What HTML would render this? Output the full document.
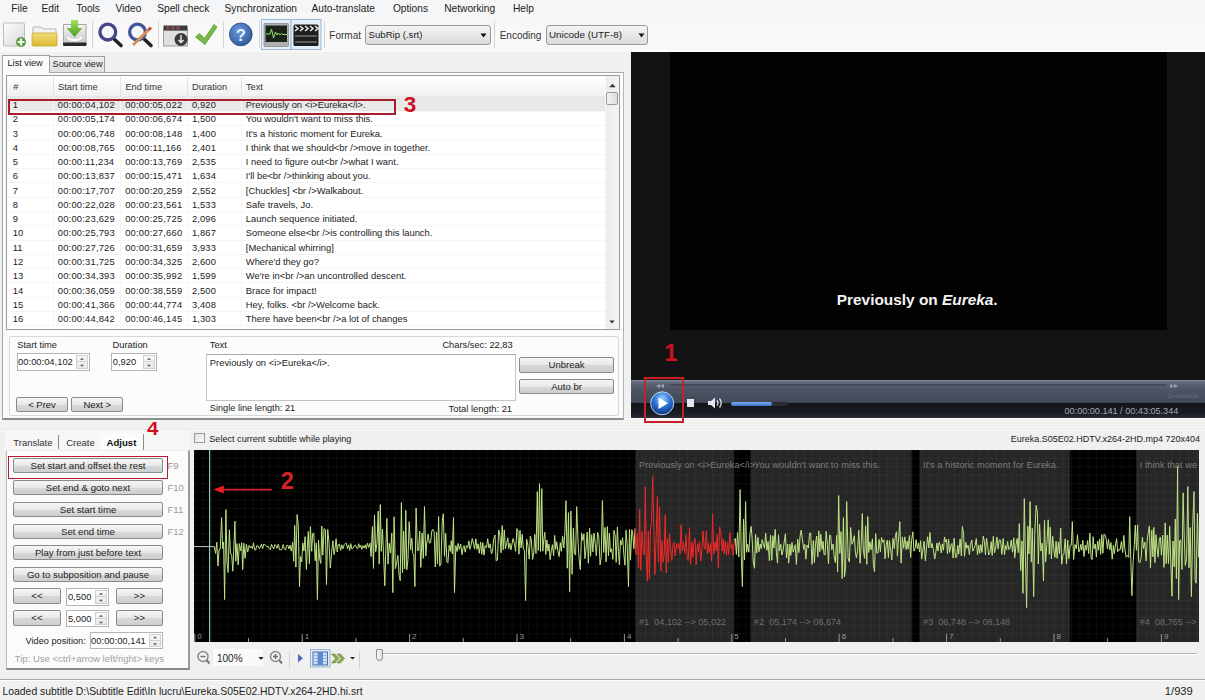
<!DOCTYPE html><html><head><meta charset="utf-8"><style>*{box-sizing:border-box;margin:0;padding:0}
html,body{width:1205px;height:700px;overflow:hidden;background:#f0f0f0;font-family:"Liberation Sans",sans-serif;color:#1e1e1e;position:relative}
.a{position:absolute}
.t{position:absolute;white-space:nowrap;line-height:1}
.btn{position:absolute;border:1px solid #8a8a8a;border-radius:2px;background:linear-gradient(#f6f6f6,#e8e8e8 50%,#d8d8d8 51%,#cfcfcf);text-align:center;font-size:9.5px;color:#222;white-space:nowrap}
.sep{position:absolute;width:1px;background:#c8c8c8;border-right:1px solid #fff}
</style></head><body>
<div class="a" style="left:0;top:0;width:1205px;height:18px;background:linear-gradient(#f4f5f6,#f7f7f8)"></div>
<div class="a" style="left:0;top:18px;width:1205px;height:34px;background:linear-gradient(#f6f6f6,#fafafa 60%,#f8f8f8)"></div>
<div class="a" style="left:631px;top:51px;width:574px;height:1px;background:#fff"></div>
<div class="t" style="left:11.20px;top:3.57px;font-size:10.2px;color:#222">File</div>
<div class="t" style="left:41.50px;top:3.57px;font-size:10.2px;color:#222">Edit</div>
<div class="t" style="left:76.20px;top:3.57px;font-size:10.2px;color:#222">Tools</div>
<div class="t" style="left:115.50px;top:3.57px;font-size:10.2px;color:#222">Video</div>
<div class="t" style="left:157.20px;top:3.57px;font-size:10.2px;color:#222">Spell check</div>
<div class="t" style="left:224.50px;top:3.57px;font-size:10.2px;color:#222">Synchronization</div>
<div class="t" style="left:311.50px;top:3.57px;font-size:10.2px;color:#222">Auto-translate</div>
<div class="t" style="left:392.90px;top:3.57px;font-size:10.2px;color:#222">Options</div>
<div class="t" style="left:444.20px;top:3.57px;font-size:10.2px;color:#222">Networking</div>
<div class="t" style="left:513.00px;top:3.57px;font-size:10.2px;color:#222">Help</div>
<div class="a" style="left:92.0px;top:21px;width:1px;height:27px;background:#d4d4d4"></div>
<div class="a" style="left:158.0px;top:21px;width:1px;height:27px;background:#d4d4d4"></div>
<div class="a" style="left:223.0px;top:21px;width:1px;height:27px;background:#d4d4d4"></div>
<div class="a" style="left:258.5px;top:21px;width:1px;height:27px;background:#d4d4d4"></div>
<div class="a" style="left:323.5px;top:21px;width:1px;height:27px;background:#d4d4d4"></div>
<div class="a" style="left:494.0px;top:21px;width:1px;height:27px;background:#d4d4d4"></div>
<svg class="a" style="left:0;top:16px" width="660" height="36" viewBox="0 16 660 36">
<defs>
<linearGradient id="gDoc" x1="0" y1="0" x2="1" y2="1"><stop offset="0" stop-color="#fdfdfd"/><stop offset="1" stop-color="#d8d8d8"/></linearGradient>
<linearGradient id="gFold" x1="0" y1="0" x2="0" y2="1"><stop offset="0" stop-color="#f4dc78"/><stop offset="1" stop-color="#dcb834"/></linearGradient>
<linearGradient id="gTray" x1="0" y1="0" x2="0" y2="1"><stop offset="0" stop-color="#f4f4f4"/><stop offset="1" stop-color="#c8c8c8"/></linearGradient>
<linearGradient id="gGreen" x1="0" y1="0" x2="0" y2="1"><stop offset="0" stop-color="#a8e060"/><stop offset="1" stop-color="#4a9a20"/></linearGradient>
<radialGradient id="gHelp" cx="0.4" cy="0.35" r="0.7"><stop offset="0" stop-color="#6a9ad8"/><stop offset="1" stop-color="#2a5a9a"/></radialGradient>
</defs>
<!-- new doc -->
<rect x="3.5" y="23" width="21" height="23" rx="1" fill="url(#gDoc)" stroke="#bdbdbd" stroke-width="1"/>
<circle cx="21" cy="42" r="5" fill="#5a9a4a"/>
<path d="M21 38.6v6.8M17.6 42h6.8" stroke="#e8f8d8" stroke-width="2.2"/>
<!-- folder -->
<path d="M33 27h8l2 2h13v5H33z" fill="#f2f2f2" stroke="#b8b8b8" stroke-width="1"/>
<rect x="32" y="33" width="25" height="13" rx="1" fill="url(#gFold)" stroke="#c8a830" stroke-width="0.8"/>
<!-- download tray -->
<rect x="63.5" y="24.5" width="22.5" height="20" fill="url(#gTray)" stroke="#a8a8a8" stroke-width="1"/>
<rect x="63" y="42.5" width="23.5" height="3.5" rx="1" fill="#2a2a2a"/>
<path d="M68 37c0 4 13 4 13 0" fill="none" stroke="#fff" stroke-width="2"/>
<path d="M71 20h7v8h4.5l-8 9-8-9H71z" fill="url(#gGreen)"/>
<!-- magnifier 1 -->
<line x1="113" y1="38" x2="121" y2="45.5" stroke="#222" stroke-width="3.6" stroke-linecap="round"/>
<circle cx="107.8" cy="32.1" r="7.9" fill="#f4f6fa" stroke="#45458a" stroke-width="3.3"/>
<!-- magnifier 2 + pencil -->
<line x1="143" y1="38" x2="151" y2="45.5" stroke="#222" stroke-width="3.6" stroke-linecap="round"/>
<circle cx="137.5" cy="32.1" r="7.9" fill="#f4f6fa" stroke="#45559a" stroke-width="3.3"/>
<line x1="133" y1="45" x2="150.5" y2="28" stroke="#d89050" stroke-width="3"/>
<line x1="148.5" y1="30" x2="151" y2="27.5" stroke="#c05040" stroke-width="3"/>
<!-- clapper -->
<rect x="163.5" y="30" width="24" height="16" fill="#e0e0e0" stroke="#9a9a9a" stroke-width="1"/>
<rect x="163.5" y="25.5" width="24" height="5" fill="#3a3a3a"/>
<path d="M166 26l3 2-3 2M171 26l3 2-3 2M176 26l3 2-3 2" fill="none" stroke="#9a5050" stroke-width="1.5"/>
<circle cx="181" cy="39.5" r="6.5" fill="#3a3a3a"/>
<path d="M181 35v7M178.5 40l2.5 2.5 2.5-2.5" fill="none" stroke="#eee" stroke-width="1.4"/>
<!-- check -->
<path d="M195.5 37l4-3.5 5 5 9.5-14 3 2.5-12 17.5z" fill="#78b848" stroke="#5a9a30" stroke-width="0.8"/>
<!-- help -->
<circle cx="240.8" cy="34.4" r="11.4" fill="url(#gHelp)" stroke="#2a4a7a" stroke-width="0.8"/>
<text x="240.8" y="41" text-anchor="middle" font-family="Liberation Sans" font-weight="bold" font-size="16" fill="#eef4ff">?</text>
<!-- waveform toggle -->
<rect x="261.5" y="19.5" width="29.5" height="30" fill="#e4eef8" stroke="#9ab8d8" stroke-width="1"/>
<rect x="264" y="23.5" width="24.5" height="23" rx="1" fill="#b0b0b0" stroke="#8a8a8a" stroke-width="0.8"/>
<rect x="265.5" y="25.5" width="21.5" height="16.5" fill="#1a2418"/>
<path d="M266 34h4l1.5-5 2 9 2-6 1.5 3 1.5-2 1.5 2 1.5-1.5 1.5 1h4" fill="none" stroke="#90e070" stroke-width="1"/>
<!-- video toggle -->
<rect x="291" y="19.5" width="30" height="30" fill="#e4eef8" stroke="#9ab8d8" stroke-width="1"/>
<rect x="293.5" y="24.5" width="25" height="21.5" rx="1.5" fill="#1e1e1e"/>
<path d="M295 26l3 2.5-3 2.5M300 26l3 2.5-3 2.5M305 26l3 2.5-3 2.5M310 26l3 2.5-3 2.5M315 26l3 2.5-3 2.5" fill="none" stroke="#e8e8e8" stroke-width="1.6"/>
<path d="M295 36h22M295 42h22" stroke="#9a9a9a" stroke-width="1"/>
</svg>
<div class="t" style="left:329.30px;top:30.93px;font-size:10px;color:#333">Format</div>
<div class="a" style="left:365px;top:25px;width:126px;height:20px;border:1px solid #9a9a9a;border-radius:3px;background:linear-gradient(#f4f4f4,#e8e8e8 50%,#dcdcdc)"></div>
<div class="t" style="left:368.60px;top:30.47px;font-size:9.6px;color:#222">SubRip (.srt)</div>
<svg class="a" style="left:480px;top:33px" width="7" height="5"><path d="M0.5 0.5h6l-3 4z" fill="#111"/></svg>
<div class="t" style="left:499.70px;top:30.93px;font-size:10px;color:#333">Encoding</div>
<div class="a" style="left:546px;top:25px;width:102px;height:20px;border:1px solid #9a9a9a;border-radius:3px;background:linear-gradient(#f4f4f4,#e8e8e8 50%,#dcdcdc)"></div>
<div class="t" style="left:549.00px;top:30.30px;font-size:9.8px;color:#222">Unicode (UTF-8)</div>
<svg class="a" style="left:637.5px;top:33px" width="7" height="5"><path d="M0.5 0.5h6l-3 4z" fill="#111"/></svg>
<div class="a" style="left:0;top:417.5px;width:1205px;height:11.5px;background:#f2f2f1;border-top:1px solid #fbfbfb"></div>
<div class="a" style="left:2px;top:71.5px;width:622px;height:348px;border:1px solid #a8a8a8;border-bottom:2px solid #8e8e8e;border-right:1px solid #b4b4b4;background:#fbfbfb"></div>
<div class="a" style="left:49px;top:56px;width:56px;height:16px;border:1px solid #a0a0a0;border-bottom:none;background:linear-gradient(#f0f0f0,#e0e0e0)"></div>
<div class="t" style="left:52.50px;top:60.21px;font-size:9.2px;color:#222">Source view</div>
<div class="a" style="left:2px;top:54.5px;width:48px;height:18px;border:1px solid #a0a0a0;border-bottom:none;background:#fbfbfb"></div>
<div class="t" style="left:7.50px;top:58.71px;font-size:9.2px;color:#222">List view</div>
<div class="a" style="left:6px;top:75px;width:614px;height:255px;border:1px solid #9a9a9a;background:#fff"></div>
<div class="a" style="left:7px;top:76px;width:598px;height:20.5px;background:linear-gradient(#ffffff,#f6f6f6 60%,#f0f0f2);border-bottom:1px solid #e6e6e6"></div>
<div class="a" style="left:53.0px;top:77px;width:1px;height:19px;background:#e2e2e2"></div>
<div class="a" style="left:120.2px;top:77px;width:1px;height:19px;background:#e2e2e2"></div>
<div class="a" style="left:186.9px;top:77px;width:1px;height:19px;background:#e2e2e2"></div>
<div class="a" style="left:241.1px;top:77px;width:1px;height:19px;background:#e2e2e2"></div>
<div class="t" style="left:13.30px;top:83.33px;font-size:9.3px;color:#333">#</div>
<div class="t" style="left:58.00px;top:83.33px;font-size:9.3px;color:#333">Start time</div>
<div class="t" style="left:125.40px;top:83.33px;font-size:9.3px;color:#333">End time</div>
<div class="t" style="left:192.00px;top:83.33px;font-size:9.3px;color:#333">Duration</div>
<div class="t" style="left:245.90px;top:83.33px;font-size:9.3px;color:#333">Text</div>
<div class="a" style="left:7px;top:96.5px;width:598px;height:15px;background:#e9e9ea"></div>
<div class="a" style="left:7px;top:111.1px;width:598px;height:1px;background:#f5f5f5"></div>
<div class="a" style="left:7px;top:125.3px;width:598px;height:1px;background:#f5f5f5"></div>
<div class="a" style="left:7px;top:139.6px;width:598px;height:1px;background:#f5f5f5"></div>
<div class="a" style="left:7px;top:153.9px;width:598px;height:1px;background:#f5f5f5"></div>
<div class="a" style="left:7px;top:168.2px;width:598px;height:1px;background:#f5f5f5"></div>
<div class="a" style="left:7px;top:182.4px;width:598px;height:1px;background:#f5f5f5"></div>
<div class="a" style="left:7px;top:196.7px;width:598px;height:1px;background:#f5f5f5"></div>
<div class="a" style="left:7px;top:211.0px;width:598px;height:1px;background:#f5f5f5"></div>
<div class="a" style="left:7px;top:225.2px;width:598px;height:1px;background:#f5f5f5"></div>
<div class="a" style="left:7px;top:239.5px;width:598px;height:1px;background:#f5f5f5"></div>
<div class="a" style="left:7px;top:253.8px;width:598px;height:1px;background:#f5f5f5"></div>
<div class="a" style="left:7px;top:268.0px;width:598px;height:1px;background:#f5f5f5"></div>
<div class="a" style="left:7px;top:282.3px;width:598px;height:1px;background:#f5f5f5"></div>
<div class="a" style="left:7px;top:296.6px;width:598px;height:1px;background:#f5f5f5"></div>
<div class="a" style="left:7px;top:310.8px;width:598px;height:1px;background:#f5f5f5"></div>
<div class="a" style="left:7px;top:325.1px;width:598px;height:1px;background:#f5f5f5"></div>
<div class="a" style="left:53.0px;top:97px;width:1px;height:232px;background:#f6f6f6"></div>
<div class="a" style="left:120.2px;top:97px;width:1px;height:232px;background:#f6f6f6"></div>
<div class="a" style="left:186.9px;top:97px;width:1px;height:232px;background:#f6f6f6"></div>
<div class="a" style="left:241.1px;top:97px;width:1px;height:232px;background:#f6f6f6"></div>
<div class="t" style="left:12.80px;top:100.04px;font-size:9.4px;color:#222">1</div>
<div class="t" style="left:57.80px;top:100.04px;font-size:9.4px;color:#222;letter-spacing:0.2px">00:00:04,102</div>
<div class="t" style="left:125.20px;top:100.04px;font-size:9.4px;color:#222;letter-spacing:0.2px">00:00:05,022</div>
<div class="t" style="left:191.90px;top:100.04px;font-size:9.4px;color:#222;letter-spacing:0.15px">0,920</div>
<div class="t" style="left:245.80px;top:100.04px;font-size:9.4px;color:#222">Previously on &lt;i&gt;Eureka&lt;/i&gt;.</div>
<div class="t" style="left:12.80px;top:114.31px;font-size:9.4px;color:#222">2</div>
<div class="t" style="left:57.80px;top:114.31px;font-size:9.4px;color:#222;letter-spacing:0.2px">00:00:05,174</div>
<div class="t" style="left:125.20px;top:114.31px;font-size:9.4px;color:#222;letter-spacing:0.2px">00:00:06,674</div>
<div class="t" style="left:191.90px;top:114.31px;font-size:9.4px;color:#222;letter-spacing:0.15px">1,500</div>
<div class="t" style="left:245.80px;top:114.31px;font-size:9.4px;color:#222">You wouldn't want to miss this.</div>
<div class="t" style="left:12.80px;top:128.58px;font-size:9.4px;color:#222">3</div>
<div class="t" style="left:57.80px;top:128.58px;font-size:9.4px;color:#222;letter-spacing:0.2px">00:00:06,748</div>
<div class="t" style="left:125.20px;top:128.58px;font-size:9.4px;color:#222;letter-spacing:0.2px">00:00:08,148</div>
<div class="t" style="left:191.90px;top:128.58px;font-size:9.4px;color:#222;letter-spacing:0.15px">1,400</div>
<div class="t" style="left:245.80px;top:128.58px;font-size:9.4px;color:#222">It's a historic moment for Eureka.</div>
<div class="t" style="left:12.80px;top:142.85px;font-size:9.4px;color:#222">4</div>
<div class="t" style="left:57.80px;top:142.85px;font-size:9.4px;color:#222;letter-spacing:0.2px">00:00:08,765</div>
<div class="t" style="left:125.20px;top:142.85px;font-size:9.4px;color:#222;letter-spacing:0.2px">00:00:11,166</div>
<div class="t" style="left:191.90px;top:142.85px;font-size:9.4px;color:#222;letter-spacing:0.15px">2,401</div>
<div class="t" style="left:245.80px;top:142.85px;font-size:9.4px;color:#222">I think that we should&lt;br /&gt;move in together.</div>
<div class="t" style="left:12.80px;top:157.12px;font-size:9.4px;color:#222">5</div>
<div class="t" style="left:57.80px;top:157.12px;font-size:9.4px;color:#222;letter-spacing:0.2px">00:00:11,234</div>
<div class="t" style="left:125.20px;top:157.12px;font-size:9.4px;color:#222;letter-spacing:0.2px">00:00:13,769</div>
<div class="t" style="left:191.90px;top:157.12px;font-size:9.4px;color:#222;letter-spacing:0.15px">2,535</div>
<div class="t" style="left:245.80px;top:157.12px;font-size:9.4px;color:#222">I need to figure out&lt;br /&gt;what I want.</div>
<div class="t" style="left:12.80px;top:171.39px;font-size:9.4px;color:#222">6</div>
<div class="t" style="left:57.80px;top:171.39px;font-size:9.4px;color:#222;letter-spacing:0.2px">00:00:13,837</div>
<div class="t" style="left:125.20px;top:171.39px;font-size:9.4px;color:#222;letter-spacing:0.2px">00:00:15,471</div>
<div class="t" style="left:191.90px;top:171.39px;font-size:9.4px;color:#222;letter-spacing:0.15px">1,634</div>
<div class="t" style="left:245.80px;top:171.39px;font-size:9.4px;color:#222">I'll be&lt;br /&gt;thinking about you.</div>
<div class="t" style="left:12.80px;top:185.66px;font-size:9.4px;color:#222">7</div>
<div class="t" style="left:57.80px;top:185.66px;font-size:9.4px;color:#222;letter-spacing:0.2px">00:00:17,707</div>
<div class="t" style="left:125.20px;top:185.66px;font-size:9.4px;color:#222;letter-spacing:0.2px">00:00:20,259</div>
<div class="t" style="left:191.90px;top:185.66px;font-size:9.4px;color:#222;letter-spacing:0.15px">2,552</div>
<div class="t" style="left:245.80px;top:185.66px;font-size:9.4px;color:#222">[Chuckles] &lt;br /&gt;Walkabout.</div>
<div class="t" style="left:12.80px;top:199.93px;font-size:9.4px;color:#222">8</div>
<div class="t" style="left:57.80px;top:199.93px;font-size:9.4px;color:#222;letter-spacing:0.2px">00:00:22,028</div>
<div class="t" style="left:125.20px;top:199.93px;font-size:9.4px;color:#222;letter-spacing:0.2px">00:00:23,561</div>
<div class="t" style="left:191.90px;top:199.93px;font-size:9.4px;color:#222;letter-spacing:0.15px">1,533</div>
<div class="t" style="left:245.80px;top:199.93px;font-size:9.4px;color:#222">Safe travels, Jo.</div>
<div class="t" style="left:12.80px;top:214.20px;font-size:9.4px;color:#222">9</div>
<div class="t" style="left:57.80px;top:214.20px;font-size:9.4px;color:#222;letter-spacing:0.2px">00:00:23,629</div>
<div class="t" style="left:125.20px;top:214.20px;font-size:9.4px;color:#222;letter-spacing:0.2px">00:00:25,725</div>
<div class="t" style="left:191.90px;top:214.20px;font-size:9.4px;color:#222;letter-spacing:0.15px">2,096</div>
<div class="t" style="left:245.80px;top:214.20px;font-size:9.4px;color:#222">Launch sequence initiated.</div>
<div class="t" style="left:12.80px;top:228.47px;font-size:9.4px;color:#222">10</div>
<div class="t" style="left:57.80px;top:228.47px;font-size:9.4px;color:#222;letter-spacing:0.2px">00:00:25,793</div>
<div class="t" style="left:125.20px;top:228.47px;font-size:9.4px;color:#222;letter-spacing:0.2px">00:00:27,660</div>
<div class="t" style="left:191.90px;top:228.47px;font-size:9.4px;color:#222;letter-spacing:0.15px">1,867</div>
<div class="t" style="left:245.80px;top:228.47px;font-size:9.4px;color:#222">Someone else&lt;br /&gt;is controlling this launch.</div>
<div class="t" style="left:12.80px;top:242.74px;font-size:9.4px;color:#222">11</div>
<div class="t" style="left:57.80px;top:242.74px;font-size:9.4px;color:#222;letter-spacing:0.2px">00:00:27,726</div>
<div class="t" style="left:125.20px;top:242.74px;font-size:9.4px;color:#222;letter-spacing:0.2px">00:00:31,659</div>
<div class="t" style="left:191.90px;top:242.74px;font-size:9.4px;color:#222;letter-spacing:0.15px">3,933</div>
<div class="t" style="left:245.80px;top:242.74px;font-size:9.4px;color:#222">[Mechanical whirring]</div>
<div class="t" style="left:12.80px;top:257.01px;font-size:9.4px;color:#222">12</div>
<div class="t" style="left:57.80px;top:257.01px;font-size:9.4px;color:#222;letter-spacing:0.2px">00:00:31,725</div>
<div class="t" style="left:125.20px;top:257.01px;font-size:9.4px;color:#222;letter-spacing:0.2px">00:00:34,325</div>
<div class="t" style="left:191.90px;top:257.01px;font-size:9.4px;color:#222;letter-spacing:0.15px">2,600</div>
<div class="t" style="left:245.80px;top:257.01px;font-size:9.4px;color:#222">Where'd they go?</div>
<div class="t" style="left:12.80px;top:271.28px;font-size:9.4px;color:#222">13</div>
<div class="t" style="left:57.80px;top:271.28px;font-size:9.4px;color:#222;letter-spacing:0.2px">00:00:34,393</div>
<div class="t" style="left:125.20px;top:271.28px;font-size:9.4px;color:#222;letter-spacing:0.2px">00:00:35,992</div>
<div class="t" style="left:191.90px;top:271.28px;font-size:9.4px;color:#222;letter-spacing:0.15px">1,599</div>
<div class="t" style="left:245.80px;top:271.28px;font-size:9.4px;color:#222">We're in&lt;br /&gt;an uncontrolled descent.</div>
<div class="t" style="left:12.80px;top:285.55px;font-size:9.4px;color:#222">14</div>
<div class="t" style="left:57.80px;top:285.55px;font-size:9.4px;color:#222;letter-spacing:0.2px">00:00:36,059</div>
<div class="t" style="left:125.20px;top:285.55px;font-size:9.4px;color:#222;letter-spacing:0.2px">00:00:38,559</div>
<div class="t" style="left:191.90px;top:285.55px;font-size:9.4px;color:#222;letter-spacing:0.15px">2,500</div>
<div class="t" style="left:245.80px;top:285.55px;font-size:9.4px;color:#222">Brace for impact!</div>
<div class="t" style="left:12.80px;top:299.82px;font-size:9.4px;color:#222">15</div>
<div class="t" style="left:57.80px;top:299.82px;font-size:9.4px;color:#222;letter-spacing:0.2px">00:00:41,366</div>
<div class="t" style="left:125.20px;top:299.82px;font-size:9.4px;color:#222;letter-spacing:0.2px">00:00:44,774</div>
<div class="t" style="left:191.90px;top:299.82px;font-size:9.4px;color:#222;letter-spacing:0.15px">3,408</div>
<div class="t" style="left:245.80px;top:299.82px;font-size:9.4px;color:#222">Hey, folks. &lt;br /&gt;Welcome back.</div>
<div class="t" style="left:12.80px;top:314.09px;font-size:9.4px;color:#222">16</div>
<div class="t" style="left:57.80px;top:314.09px;font-size:9.4px;color:#222;letter-spacing:0.2px">00:00:44,842</div>
<div class="t" style="left:125.20px;top:314.09px;font-size:9.4px;color:#222;letter-spacing:0.2px">00:00:46,145</div>
<div class="t" style="left:191.90px;top:314.09px;font-size:9.4px;color:#222;letter-spacing:0.15px">1,303</div>
<div class="t" style="left:245.80px;top:314.09px;font-size:9.4px;color:#222">There have been&lt;br /&gt;a lot of changes</div>
<div class="a" style="left:605px;top:76px;width:14px;height:253px;background:linear-gradient(90deg,#ececec,#f4f4f4);border-left:1px solid #f8f8f8"></div>
<svg class="a" style="left:608.5px;top:83px" width="7" height="5"><path d="M0.8 4L3.5 1 6.2 4z" fill="#3a3a3a" stroke="#3a3a3a" stroke-width="0.6"/></svg>
<svg class="a" style="left:608.8px;top:319.5px" width="6" height="4"><path d="M0.8 0.8L3 3.2 5.2 0.8z" fill="#3a3a3a" stroke="#3a3a3a" stroke-width="0.5"/></svg>
<div class="a" style="left:605.5px;top:92px;width:12.5px;height:12.5px;border:1px solid #9a9a9a;border-radius:2px;background:linear-gradient(90deg,#f4f4f4,#dcdcdc)"></div>
<div class="a" style="left:8px;top:99px;width:388px;height:15.5px;border:2px solid #a81c2c"></div>
<div class="t" style="left:403.80px;top:93.75px;font-size:22.5px;color:#cc1122;font-weight:bold">3</div>
<div class="a" style="left:8.5px;top:336px;width:610.5px;height:80px;border:1px solid #d8d8d8;border-radius:2px;background:#fcfcfc"></div>
<div class="t" style="left:17.20px;top:341.33px;font-size:9.3px;color:#222">Start time</div>
<div class="t" style="left:112.60px;top:341.33px;font-size:9.3px;color:#222">Duration</div>
<div class="t" style="left:209.80px;top:341.33px;font-size:9.3px;color:#222">Text</div>
<div class="t" style="left:442.40px;top:341.33px;font-size:9.3px;color:#222">Chars/sec: 22,83</div>
<div class="a" style="left:16.6px;top:353.2px;width:73px;height:17.5px;border:1px solid #b4b4b4;background:#fff"></div><div class="a" style="left:75.6px;top:355.2px;width:12px;height:13.5px;border:1px solid #d0d0d0;background:linear-gradient(#f8f8f8,#e8e8e8)"></div><div class="a" style="left:76.6px;top:361.45px;width:10px;height:1px;background:#d0d0d0"></div><svg class="a" style="left:78.6px;top:356.2px" width="6" height="11.5"><path d="M1 3.75l2-2 2 2z M1 8.75l2 2 2-2z" fill="#5a5a5a"/></svg><div class="t" style="left:18.10px;top:357.39px;font-size:9.4px;color:#222">00:00:04,102</div>
<div class="a" style="left:111.2px;top:353.2px;width:46px;height:17.5px;border:1px solid #b4b4b4;background:#fff"></div><div class="a" style="left:143.2px;top:355.2px;width:12px;height:13.5px;border:1px solid #d0d0d0;background:linear-gradient(#f8f8f8,#e8e8e8)"></div><div class="a" style="left:144.2px;top:361.45px;width:10px;height:1px;background:#d0d0d0"></div><svg class="a" style="left:146.2px;top:356.2px" width="6" height="11.5"><path d="M1 3.75l2-2 2 2z M1 8.75l2 2 2-2z" fill="#5a5a5a"/></svg><div class="t" style="left:112.70px;top:357.39px;font-size:9.4px;color:#222">0,920</div>
<div class="btn" style="left:16.3px;top:397.2px;width:51.4px;height:15px;line-height:13px">&lt; Prev</div>
<div class="btn" style="left:71.4px;top:397.2px;width:51.8px;height:15px;line-height:13px">Next &gt;</div>
<div class="a" style="left:205.5px;top:353.5px;width:310px;height:47px;border:1px solid #c4c4c4;border-top-color:#a8a8a8;background:#fff"></div>
<div class="t" style="left:209.80px;top:358.34px;font-size:9.4px;color:#222">Previously on &lt;i&gt;Eureka&lt;/i&gt;.</div>
<div class="t" style="left:209.80px;top:404.01px;font-size:9.2px;color:#222">Single line length: 21</div>
<div class="t" style="left:448.50px;top:403.84px;font-size:9.4px;color:#222">Total length: 21</div>
<div class="btn" style="left:519.3px;top:357px;width:94.5px;height:15.5px;line-height:13.5px">Unbreak</div>
<div class="btn" style="left:519.3px;top:378.8px;width:94.5px;height:15.7px;line-height:13.7px">Auto br</div>
<div class="a" style="left:631px;top:52px;width:574px;height:328px;background:#131313"></div>
<div class="a" style="left:669.5px;top:52px;width:497px;height:277.5px;background:#020203"></div>
<div class="t" style="left:836.8px;top:292.4px;font-size:15.4px;font-weight:bold;color:#f4f4f4">Previously on <i>Eureka</i>.</div>
<div class="a" style="left:631px;top:379.5px;width:574px;height:24px;background:linear-gradient(#8a90a0 0,#6a7282 1.5px,#5a6272 4px,#4e5666 40%,#3e4656 100%)"></div>
<div class="a" style="left:631px;top:403px;width:574px;height:14.5px;background:linear-gradient(#121418,#1a1c24 70%,#2a2c36)"></div>
<div class="a" style="left:670px;top:383.5px;width:496px;height:3px;background:linear-gradient(#3a4050,#5a6070);border-radius:1px"></div>
<svg class="a" style="left:656px;top:384px" width="9" height="5"><path d="M4 0v4L0 2zM8 0v4L4 2z" fill="#9aa0b0"/></svg>
<svg class="a" style="left:1169px;top:384px" width="9" height="5"><path d="M1 0v4l4-2zM5 0v4l4-2z" fill="#9aa0b0"/></svg>
<div class="t" style="left:1168px;top:393px;font-size:6px;color:#6a7080">DirectShow</div>
<svg class="a" style="left:649px;top:390px" width="27" height="27">
<defs><radialGradient id="gPlay" cx="0.5" cy="0.3" r="0.75"><stop offset="0" stop-color="#9ad0ff"/><stop offset="0.5" stop-color="#2a70d0"/><stop offset="1" stop-color="#0a2a70"/></radialGradient></defs>
<circle cx="13.2" cy="13.3" r="11.5" fill="url(#gPlay)" stroke="#c0d8f0" stroke-width="1"/>
<path d="M9.5 7.5v11.6l9.5-5.8z" fill="#fff"/>
</svg>
<div class="a" style="left:686.5px;top:399.3px;width:7.5px;height:7.5px;background:#e8e8ec"></div>
<svg class="a" style="left:707px;top:397px" width="16" height="12"><path d="M1 4h3l4-3.5v11L4 8H1z" fill="#e8e8ec"/><path d="M10 3.5q2 2.5 0 5M12.5 1.5q3.5 4.5 0 9" fill="none" stroke="#e0e0e6" stroke-width="1.3"/></svg>
<div class="a" style="left:730.5px;top:402px;width:57px;height:3.5px;background:#2a2c34;border-radius:2px"></div>
<div class="a" style="left:730.5px;top:402px;width:41.5px;height:3.5px;background:linear-gradient(#7ab0f0,#3a70c8);border-radius:2px"></div>
<div class="t" style="left:1064.5px;top:406.5px;font-size:9.1px;color:#a4a8b2">00:00:00.141 / 00:43:05.344</div>
<div class="a" style="left:643.5px;top:376.8px;width:40px;height:46.6px;border:2px solid #c82028"></div>
<div class="t" style="left:664.50px;top:342.13px;font-size:23px;color:#d01020;font-weight:bold">1</div>
<div class="a" style="left:0;top:429px;width:1205px;height:1px;background:#e9e9e9"></div>
<div class="a" style="left:0;top:430px;width:1205px;height:1px;background:#fafafa"></div>
<div class="a" style="left:5px;top:431px;width:185px;height:19px;background:#f6f6f6"></div>
<div class="a" style="left:5.5px;top:449.5px;width:184.5px;height:220.5px;border:1px solid #b8b8b8;border-top-color:#ececec;border-bottom:2px solid #8a8a8a;border-right:2px solid #9a9a9a;background:#fbfbfb"></div>
<div class="a" style="left:100px;top:433px;width:43px;height:17px;background:#fcfcfc"></div>
<div class="a" style="left:57.6px;top:435px;width:1.3px;height:14px;background:#8a8a8a"></div>
<div class="a" style="left:143px;top:434px;width:1.3px;height:16px;background:#8a8a8a"></div>
<div class="t" style="left:13.30px;top:437.76px;font-size:9.5px;color:#333">Translate</div>
<div class="t" style="left:66.20px;top:437.76px;font-size:9.5px;color:#333">Create</div>
<div class="t" style="left:106.50px;top:437.67px;font-size:9.6px;color:#111;font-weight:bold">Adjust</div>
<div class="t" style="left:147.20px;top:420.99px;font-size:17.5px;color:#d01020;font-weight:bold;transform:scaleX(1.18);transform-origin:0 0">4</div>
<div class="btn" style="left:13.3px;top:458.2px;width:149.4px;height:15.2px;line-height:13.2px;font-size:9.6px">Set start and offset the rest</div>
<div class="t" style="left:167.50px;top:461.46px;font-size:9.5px;color:#9a9a9a">F9</div>
<div class="btn" style="left:13.3px;top:479.8px;width:149.4px;height:15.2px;line-height:13.2px;font-size:9.6px">Set end &amp; goto next</div>
<div class="t" style="left:167.50px;top:483.06px;font-size:9.5px;color:#9a9a9a">F10</div>
<div class="btn" style="left:13.3px;top:501.6px;width:149.4px;height:15.2px;line-height:13.2px;font-size:9.6px">Set start time</div>
<div class="t" style="left:167.50px;top:504.86px;font-size:9.5px;color:#9a9a9a">F11</div>
<div class="btn" style="left:13.3px;top:523.5px;width:149.4px;height:15.2px;line-height:13.2px;font-size:9.6px">Set end time</div>
<div class="t" style="left:167.50px;top:526.76px;font-size:9.5px;color:#9a9a9a">F12</div>
<div class="btn" style="left:13.3px;top:545.3px;width:149.4px;height:15.2px;line-height:13.2px;font-size:9.6px">Play from just before text</div>
<div class="btn" style="left:13.3px;top:566.8px;width:149.4px;height:15.2px;line-height:13.2px;font-size:9.6px">Go to subposition and pause</div>
<div class="a" style="left:8.3px;top:455.7px;width:159.5px;height:23.5px;border:1.8px solid #b81c2c"></div>
<div class="btn" style="left:13.3px;top:588.3px;width:47.3px;height:15.4px;line-height:13.4px;font-size:9.6px">&lt;&lt;</div>
<div class="btn" style="left:116.2px;top:588.3px;width:46.5px;height:15.4px;line-height:13.4px;font-size:9.6px">&gt;&gt;</div>
<div class="a" style="left:66.4px;top:588.3px;width:42.3px;height:17.3px;border:1px solid #b4b4b4;background:#fff"></div><div class="a" style="left:94.7px;top:590.3px;width:12px;height:13.3px;border:1px solid #d0d0d0;background:linear-gradient(#f8f8f8,#e8e8e8)"></div><div class="a" style="left:95.7px;top:596.4499999999999px;width:10px;height:1px;background:#d0d0d0"></div><svg class="a" style="left:97.7px;top:591.3px" width="6" height="11.3"><path d="M1 3.6500000000000004l2-2 2 2z M1 8.65l2 2 2-2z" fill="#5a5a5a"/></svg><div class="t" style="left:67.90px;top:592.39px;font-size:9.4px;color:#222">0,500</div>
<div class="btn" style="left:13.3px;top:610.2px;width:47.3px;height:15.4px;line-height:13.4px;font-size:9.6px">&lt;&lt;</div>
<div class="btn" style="left:116.2px;top:610.2px;width:46.5px;height:15.4px;line-height:13.4px;font-size:9.6px">&gt;&gt;</div>
<div class="a" style="left:66.4px;top:610.2px;width:42.3px;height:17.3px;border:1px solid #b4b4b4;background:#fff"></div><div class="a" style="left:94.7px;top:612.2px;width:12px;height:13.3px;border:1px solid #d0d0d0;background:linear-gradient(#f8f8f8,#e8e8e8)"></div><div class="a" style="left:95.7px;top:618.35px;width:10px;height:1px;background:#d0d0d0"></div><svg class="a" style="left:97.7px;top:613.2px" width="6" height="11.3"><path d="M1 3.6500000000000004l2-2 2 2z M1 8.65l2 2 2-2z" fill="#5a5a5a"/></svg><div class="t" style="left:67.90px;top:614.29px;font-size:9.4px;color:#222">5,000</div>
<div class="t" style="left:25.60px;top:636.81px;font-size:9.2px;color:#222">Video position:</div>
<div class="a" style="left:89.6px;top:632.3px;width:73px;height:16.6px;border:1px solid #b4b4b4;background:#fff"></div><div class="a" style="left:148.6px;top:634.3px;width:12px;height:12.600000000000001px;border:1px solid #d0d0d0;background:linear-gradient(#f8f8f8,#e8e8e8)"></div><div class="a" style="left:149.6px;top:640.0999999999999px;width:10px;height:1px;background:#d0d0d0"></div><svg class="a" style="left:151.6px;top:635.3px" width="6" height="10.600000000000001"><path d="M1 3.3000000000000007l2-2 2 2z M1 8.3l2 2 2-2z" fill="#5a5a5a"/></svg><div class="t" style="left:91.10px;top:636.04px;font-size:9.4px;color:#222">00:00:00,141</div>
<div class="t" style="left:14.80px;top:653.96px;font-size:9.5px;color:#a0a0a0">Tip: Use &lt;ctrl+arrow left/right&gt; keys</div>
<div class="a" style="left:194.2px;top:433.2px;width:10.5px;height:10.2px;border:1px solid #9a9a9a;background:linear-gradient(135deg,#e0e0e0,#fafafa)"></div>
<div class="t" style="left:209.30px;top:435.30px;font-size:9.1px;color:#222">Select current subtitle while playing</div>
<div class="t" style="left:1010.80px;top:434.98px;font-size:9.0px;color:#222">Eureka.S05E02.HDTV.x264-2HD.mp4 720x404</div>
<div class="a" style="left:213px;top:649px;width:50px;height:17px;background:#fafafa"></div>
<svg class="a" style="left:194px;top:646px" width="180" height="24">
<circle cx="9" cy="10.5" r="5" fill="#f0f0f0" stroke="#8a8a90" stroke-width="1.5"/>
<path d="M6.5 10.5h5" stroke="#6a6a70" stroke-width="1.4"/>
<path d="M12.5 14l3 3.5" stroke="#7a7a80" stroke-width="2"/>
<circle cx="81.5" cy="10.5" r="5" fill="#f0f0f0" stroke="#8a8a90" stroke-width="1.5"/>
<path d="M79 10.5h5M81.5 8v5" stroke="#6a6a70" stroke-width="1.4"/>
<path d="M85 14l3 3.5" stroke="#7a7a80" stroke-width="2"/>
<path d="M64.5 11h5l-2.5 3z" fill="#222"/>
<path d="M104 8v8.6l5-4.3z" fill="#4a6ac0"/>
<path d="M137.5 8l4 4.5-4 4.5h3.5l4-4.5-4-4.5zM143 8l4 4.5-4 4.5h3.5l4-4.5-4-4.5z" fill="#8aaa50" stroke="#5a7a30" stroke-width="0.5"/>
<path d="M156 11h5l-2.5 2.5z" fill="#222"/>
</svg>
<div class="t" style="left:217.00px;top:653.53px;font-size:10px;color:#222">100%</div>
<div class="a" style="left:288.5px;top:652px;width:1px;height:16px;background:#d0d0d0"></div>
<div class="a" style="left:358.5px;top:652px;width:1px;height:16px;background:#d0d0d0"></div>
<svg class="a" style="left:310px;top:648.5px" width="21" height="19">
<rect x="0.5" y="0.5" width="19.5" height="17.5" fill="#e2ecf8" stroke="#98b4d4"/>
<rect x="3" y="3" width="14.5" height="13" fill="#cfe0f4" stroke="#4a6aa0" stroke-width="1"/>
<rect x="7.5" y="3" width="5.5" height="13" fill="#5a8ad0"/>
<path d="M3 6.5h4.5M3 9.5h4.5M3 12.5h4.5M13 6.5h4.5M13 9.5h4.5M13 12.5h4.5" stroke="#8aa8d0" stroke-width="0.8"/>
</svg>
<div class="a" style="left:383px;top:653px;width:814px;height:2px;background:#b4b4b4;border-bottom:1px solid #fff"></div>
<div class="a" style="left:376px;top:649px;width:7px;height:12px;border:1px solid #8a8a8a;border-radius:1px 1px 3.5px 3.5px;background:linear-gradient(90deg,#fafafa,#dcdcdc)"></div>
<div class="a" style="left:0;top:678.5px;width:1205px;height:1px;background:#a8a8a8"></div>
<div class="a" style="left:0;top:679.5px;width:1205px;height:20.5px;background:#f0f0f0;border-top:1px solid #fff"></div>
<div class="t" style="left:2.50px;top:686.80px;font-size:10.4px;color:#222">Loaded subtitle D:\Subtitle Edit\In lucru\Eureka.S05E02.HDTV.x264-2HD.hi.srt</div>
<div class="t" style="left:1164.80px;top:685.72px;font-size:11.2px;color:#222">1/939</div>
<svg class="a" style="left:193.7px;top:450px" width="1005.3" height="192" viewBox="193.7 450 1005.3 192"><rect x="193.7" y="450" width="1005.3" height="192" fill="#000"/><rect x="635.1" y="450" width="98.8" height="192" fill="#262626"/><rect x="750.2" y="450" width="161.1" height="192" fill="#262626"/><rect x="919.2" y="450" width="150.4" height="192" fill="#262626"/><rect x="1135.9" y="450" width="257.9" height="192" fill="#262626"/><path d="M194.45 450V642M202.80 450V642M211.15 450V642M219.50 450V642M227.85 450V642M236.20 450V642M244.55 450V642M252.90 450V642M261.25 450V642M269.60 450V642M277.95 450V642M286.30 450V642M294.65 450V642M303.00 450V642M311.35 450V642M319.70 450V642M328.05 450V642M336.40 450V642M344.75 450V642M353.10 450V642M361.45 450V642M369.80 450V642M378.15 450V642M386.50 450V642M394.85 450V642M403.20 450V642M411.55 450V642M419.90 450V642M428.25 450V642M436.60 450V642M444.95 450V642M453.30 450V642M461.65 450V642M470.00 450V642M478.35 450V642M486.70 450V642M495.05 450V642M503.40 450V642M511.75 450V642M520.10 450V642M528.45 450V642M536.80 450V642M545.15 450V642M553.50 450V642M561.85 450V642M570.20 450V642M578.55 450V642M586.90 450V642M595.25 450V642M603.60 450V642M611.95 450V642M620.30 450V642M628.65 450V642M637.00 450V642M645.35 450V642M653.70 450V642M662.05 450V642M670.40 450V642M678.75 450V642M687.10 450V642M695.45 450V642M703.80 450V642M712.15 450V642M720.50 450V642M728.85 450V642M737.20 450V642M745.55 450V642M753.90 450V642M762.25 450V642M770.60 450V642M778.95 450V642M787.30 450V642M795.65 450V642M804.00 450V642M812.35 450V642M820.70 450V642M829.05 450V642M837.40 450V642M845.75 450V642M854.10 450V642M862.45 450V642M870.80 450V642M879.15 450V642M887.50 450V642M895.85 450V642M904.20 450V642M912.55 450V642M920.90 450V642M929.25 450V642M937.60 450V642M945.95 450V642M954.30 450V642M962.65 450V642M971.00 450V642M979.35 450V642M987.70 450V642M996.05 450V642M1004.40 450V642M1012.75 450V642M1021.10 450V642M1029.45 450V642M1037.80 450V642M1046.15 450V642M1054.50 450V642M1062.85 450V642M1071.20 450V642M1079.55 450V642M1087.90 450V642M1096.25 450V642M1104.60 450V642M1112.95 450V642M1121.30 450V642M1129.65 450V642M1138.00 450V642M1146.35 450V642M1154.70 450V642M1163.05 450V642M1171.40 450V642M1179.75 450V642M1188.10 450V642M1196.45 450V642M193.7 450.05H1199.0M193.7 458.40H1199.0M193.7 466.75H1199.0M193.7 475.10H1199.0M193.7 483.45H1199.0M193.7 491.80H1199.0M193.7 500.15H1199.0M193.7 508.50H1199.0M193.7 516.85H1199.0M193.7 525.20H1199.0M193.7 533.55H1199.0M193.7 541.90H1199.0M193.7 550.25H1199.0M193.7 558.60H1199.0M193.7 566.95H1199.0M193.7 575.30H1199.0M193.7 583.65H1199.0M193.7 592.00H1199.0M193.7 600.35H1199.0M193.7 608.70H1199.0M193.7 617.05H1199.0M193.7 625.40H1199.0M193.7 633.75H1199.0" stroke="#7a9a7a" stroke-opacity="0.09" stroke-width="1" fill="none"/><path d="M194.5 634V642M248.2 638V642M301.9 634V642M355.6 638V642M409.3 634V642M463.0 638V642M516.7 634V642M570.4 638V642M624.1 634V642M677.8 638V642M731.5 634V642M785.2 638V642M838.9 634V642M892.6 638V642M946.3 634V642M1000.0 638V642M1053.7 634V642M1107.4 638V642M1161.1 634V642M1214.8 638V642" stroke="#9a9a9a" stroke-width="1" fill="none"/><text x="197.0" y="639" font-family="Liberation Sans" font-size="8" fill="#9a9a9a">0</text><text x="304.4" y="639" font-family="Liberation Sans" font-size="8" fill="#9a9a9a">1</text><text x="411.8" y="639" font-family="Liberation Sans" font-size="8" fill="#9a9a9a">2</text><text x="519.2" y="639" font-family="Liberation Sans" font-size="8" fill="#9a9a9a">3</text><text x="626.6" y="639" font-family="Liberation Sans" font-size="8" fill="#9a9a9a">4</text><text x="734.0" y="639" font-family="Liberation Sans" font-size="8" fill="#9a9a9a">5</text><text x="841.4" y="639" font-family="Liberation Sans" font-size="8" fill="#9a9a9a">6</text><text x="948.8" y="639" font-family="Liberation Sans" font-size="8" fill="#9a9a9a">7</text><text x="1056.2" y="639" font-family="Liberation Sans" font-size="8" fill="#9a9a9a">8</text><text x="1163.6" y="639" font-family="Liberation Sans" font-size="8" fill="#9a9a9a">9</text><text x="638.7" y="467.6" font-family="Liberation Sans" font-size="9.3" fill="#7c7c7c" xml:space="preserve">Previously on &lt;i&gt;Eureka&lt;/i&gt;.</text><text x="638.7" y="624.6" font-family="Liberation Sans" font-size="9.1" fill="#6e6e6e" xml:space="preserve">#1  04,102 --&gt; 05,022</text><text x="753.8" y="467.6" font-family="Liberation Sans" font-size="9.3" fill="#7c7c7c" xml:space="preserve">You wouldn't want to miss this.</text><text x="753.8" y="624.6" font-family="Liberation Sans" font-size="9.1" fill="#6e6e6e" xml:space="preserve">#2  05,174 --&gt; 06,674</text><text x="922.8" y="467.6" font-family="Liberation Sans" font-size="9.3" fill="#7c7c7c" xml:space="preserve">It's a historic moment for Eureka.</text><text x="922.8" y="624.6" font-family="Liberation Sans" font-size="9.1" fill="#6e6e6e" xml:space="preserve">#3  06,748 --&gt; 08,148</text><text x="1139.5" y="467.6" font-family="Liberation Sans" font-size="9.3" fill="#7c7c7c" xml:space="preserve">I think that we should</text><text x="1139.5" y="624.6" font-family="Liberation Sans" font-size="9.1" fill="#6e6e6e" xml:space="preserve">#4  08,765 --&gt; 11,166</text><path d="M193.7 546.6H214" stroke="#c8ccb8" stroke-width="1" fill="none"/><path d="M214.0 546.6 215.3 553.4 216.5 542.3 217.7 566.0 218.8 549.5 220.0 549.0 221.3 517.6 222.4 548.7 223.3 542.2 224.3 599.6 225.6 509.6 226.7 562.1 227.8 572.5 229.1 529.8 230.1 552.9 231.4 555.3 232.5 571.2 233.4 551.4 234.6 521.3 235.5 561.2 236.6 543.7 237.9 564.9 239.0 543.6 240.3 550.7 241.4 542.7 242.4 569.6 243.5 543.2 244.8 558.2 246.1 544.3 247.4 552.1 248.8 545.4 250.0 547.7 251.0 546.2 252.1 548.7 253.2 542.8 254.4 549.9 255.4 550.1 256.4 545.9 257.8 545.9 259.1 548.7 260.1 546.9 261.1 544.1 262.4 548.6 263.4 544.1 264.5 544.7 265.6 545.7 266.7 546.9 267.8 546.2 268.9 548.5 270.0 549.8 271.2 544.3 272.2 546.9 273.5 549.0 274.5 544.5 275.7 545.6 276.7 548.3 278.0 544.1 279.3 549.8 280.5 549.8 281.6 549.3 282.8 544.6 284.0 548.5 285.2 550.1 286.4 545.4 287.6 545.3 288.6 549.0 289.8 545.2 291.0 551.1 292.3 542.4 293.4 561.3 294.4 525.5 295.6 567.2 296.8 514.6 298.0 525.4 299.2 586.6 300.2 556.6 301.4 561.9 302.5 542.9 303.6 551.0 304.8 536.7 306.1 569.4 307.0 548.6 308.0 531.5 309.1 563.8 310.1 526.6 311.4 551.3 312.3 533.7 313.5 533.1 314.9 560.8 316.0 542.9 317.1 599.6 318.2 540.1 319.4 558.9 320.5 563.4 321.5 526.0 322.5 555.2 323.8 528.6 325.1 529.8 326.2 584.6 327.4 529.4 328.7 542.5 330.0 568.1 331.3 552.5 332.6 540.7 333.7 554.7 334.9 547.8 335.8 538.7 336.9 552.0 337.9 544.7 339.2 544.1 340.4 550.3 341.4 544.8 342.6 548.9 343.9 544.6 345.0 543.4 346.1 543.3 347.2 548.6 348.4 544.9 349.3 550.4 350.5 543.6 351.6 549.1 352.8 548.0 354.1 545.7 355.1 545.1 356.4 548.2 357.4 548.8 358.4 543.7 359.5 547.4 360.5 545.4 361.5 549.3 362.7 545.7 363.8 548.1 365.0 544.8 366.0 548.9 367.1 543.3 368.4 547.4 369.7 543.1 370.8 556.6 372.1 526.6 373.2 568.4 374.2 514.9 375.4 551.8 376.7 543.3 377.9 511.2 378.9 563.9 380.0 504.6 381.0 551.4 382.2 529.0 383.2 553.2 384.5 585.8 385.5 550.5 386.6 518.4 387.7 564.2 388.9 543.3 390.2 553.1 391.5 533.2 392.5 592.6 393.8 516.8 395.1 568.7 396.3 563.6 397.5 555.2 398.8 575.2 399.9 580.7 401.1 502.6 402.2 572.6 403.3 531.0 404.4 568.9 405.5 510.3 406.5 569.8 407.7 559.3 408.9 521.7 410.3 549.9 411.5 538.2 412.5 553.3 413.5 554.9 414.6 586.6 415.8 508.1 417.1 550.7 418.3 550.2 419.4 531.1 420.5 567.5 421.8 532.9 423.0 558.4 424.2 506.6 425.5 556.1 426.5 543.1 427.8 534.1 429.0 543.0 430.3 542.6 431.5 531.0 432.5 529.3 433.8 531.4 435.0 567.0 436.2 531.9 437.2 564.0 438.3 516.6 439.4 566.1 440.6 564.1 442.0 520.9 443.0 513.7 444.2 556.4 445.4 533.3 446.6 561.6 447.6 562.8 448.9 545.3 450.0 551.4 451.0 540.6 452.0 554.0 453.2 517.6 454.2 592.6 455.5 545.6 456.8 551.6 457.8 543.4 459.1 549.4 460.4 544.2 461.7 554.7 462.8 547.6 463.8 545.6 464.9 552.2 466.2 545.7 467.4 547.6 468.6 540.9 469.6 549.3 470.7 545.5 471.9 538.5 473.2 543.3 474.3 549.0 475.6 538.8 476.7 549.3 477.8 543.7 479.0 553.3 480.3 542.2 481.5 554.3 482.5 542.6 483.7 555.2 484.9 545.7 486.2 547.6 487.4 538.7 488.6 548.1 489.9 543.8 491.1 553.8 492.2 551.7 493.4 539.0 494.7 535.0 495.8 560.6 497.1 560.1 498.4 529.9 499.6 535.2 500.7 552.8 501.9 525.6 502.9 549.7 504.0 529.9 505.1 548.8 506.3 543.8 507.5 537.8 508.4 548.7 509.5 543.2 510.7 549.9 511.7 543.9 512.8 538.5 513.9 542.9 515.3 551.4 516.6 528.6 517.6 531.1 518.7 554.2 519.7 530.3 520.8 547.9 521.9 534.3 523.1 549.0 524.1 550.2 525.3 600.6 526.3 539.1 527.6 545.3 528.9 559.1 530.0 536.1 531.1 540.3 532.3 559.5 533.5 552.1 534.5 534.4 535.7 553.6 537.0 491.6 538.0 550.5 539.2 483.6 540.2 551.5 541.5 488.6 542.5 551.2 543.5 539.5 544.5 532.4 545.5 554.4 546.6 540.0 547.7 551.2 548.7 544.1 549.8 559.6 551.1 550.5 552.1 544.7 553.3 555.7 554.4 535.4 555.4 549.3 556.4 541.8 557.7 551.6 558.9 556.6 560.0 542.7 561.0 551.3 562.3 536.2 563.5 548.0 564.6 532.4 565.7 500.6 567.0 568.2 568.2 512.7 569.3 591.6 570.6 511.0 571.8 574.3 573.1 527.9 574.1 553.3 575.3 555.1 576.4 506.6 577.8 542.7 578.9 559.9 580.0 569.6 581.3 532.9 582.5 540.4 583.6 533.9 584.6 558.6 585.6 550.7 586.9 531.9 588.1 563.3 589.3 528.2 590.3 556.2 591.4 534.7 592.6 551.9 593.7 533.1 594.9 543.3 596.1 555.8 597.3 532.3 598.5 537.2 599.8 564.9 600.9 557.6 602.1 500.6 603.4 552.5 604.7 527.5 605.8 561.8 607.0 526.6 608.2 555.9 609.1 533.0 610.2 552.1 611.2 548.8 612.6 559.4 613.7 530.4 614.9 536.1 615.9 562.3 617.1 526.9 618.1 551.8 619.1 564.8 620.2 540.4 621.2 544.8 622.3 537.7 623.6 554.9 624.7 565.2 625.7 530.2 626.8 543.4 628.2 586.6 629.2 529.4 630.2 560.1 631.5 529.7 632.5 533.9 633.6 548.7 634.7 528.5" stroke="#bfe484" stroke-width="1" fill="none" stroke-linejoin="bevel"/><path d="M634.7 528.5 635.7 554.5 637.0 533.6 638.3 568.2 639.4 509.1 640.4 570.1 641.8 531.4 642.9 550.3 644.0 555.2 645.0 486.6 646.0 556.0 647.1 581.2 648.0 531.1 649.1 578.6 650.2 527.6 651.2 523.5 652.4 476.6 653.6 529.3 654.6 574.5 655.8 538.9 657.1 496.6 658.1 562.3 659.3 506.6 660.5 570.9 661.8 540.6 662.8 562.2 663.9 554.7 664.9 514.6 666.0 573.2 667.1 538.2 668.1 562.4 669.2 533.7 670.5 550.1 671.5 560.4 672.7 544.4 673.8 542.5 674.8 555.8 676.2 543.5 677.4 548.6 678.7 543.5 679.8 554.5 680.7 524.7 682.0 550.9 683.2 542.1 684.5 553.3 685.8 534.7 686.9 559.4 688.0 560.5 689.2 527.7 690.3 564.3 691.6 542.5 692.6 557.1 693.6 542.5 694.7 538.3 695.9 564.8 697.0 544.3 698.1 551.7 699.1 541.7 700.5 561.0 701.6 549.8 702.7 530.9 704.0 548.4 705.1 549.0 706.1 530.8 707.1 553.9 708.1 543.4 709.0 552.3 710.2 543.6 711.3 561.3 712.3 513.6 713.5 554.1 714.8 542.3 715.9 550.7 716.9 534.2 718.1 567.9 719.3 526.9 720.6 533.4 721.9 551.0 722.9 538.7 723.8 553.6 725.0 541.4 726.1 555.5 727.3 542.1 728.4 554.4 729.6 532.5 730.8 548.5 731.9 544.4 732.9 555.9 734.0 540.6" stroke="#ee2a28" stroke-width="1" fill="none" stroke-linejoin="bevel"/><path d="M734.0 540.6 735.0 538.3 736.1 554.5 737.2 532.5 738.5 557.0 739.8 489.6 741.0 557.9 742.1 586.6 743.2 519.0 744.2 559.9 745.3 501.6 746.3 552.3 747.4 544.3 748.5 552.2 749.7 533.9 750.9 526.4 751.9 539.5 753.0 562.2 754.2 568.3 755.3 534.5 756.4 553.1 757.7 537.4 758.7 551.8 759.9 544.2 760.9 548.7 761.9 539.7 763.0 543.9 764.3 548.3 765.4 533.1 766.7 550.4 767.8 541.6 769.1 560.8 770.2 535.0 771.5 560.2 772.6 535.7 773.6 548.1 774.9 529.3 776.1 552.9 777.2 563.1 778.2 534.8 779.2 550.9 780.5 544.3 781.5 555.1 782.6 551.2 783.9 542.3 785.1 533.8 786.2 558.0 787.4 544.0 788.4 563.1 789.6 544.3 790.5 555.5 791.7 542.5 792.9 552.1 793.9 548.4 794.9 544.7 796.1 564.5 797.4 539.2 798.6 552.6 799.8 536.0 800.9 530.0 802.2 539.9 803.5 549.5 804.5 544.3 805.6 559.2 806.7 545.1 808.1 548.1 809.3 533.2 810.4 533.0 811.7 564.3 813.0 540.5 814.1 562.5 815.3 543.1 816.4 536.0 817.5 556.9 818.5 530.8 819.5 551.6 820.5 534.2 821.8 549.5 822.8 541.3 823.7 554.4 824.8 555.0 825.8 531.3 827.1 544.4 828.2 563.7 829.3 535.0 830.4 535.6 831.5 549.6 832.8 544.0 833.9 557.0 835.1 562.6 836.3 535.4 837.3 571.9 838.4 495.6 839.5 553.5 840.7 531.7 841.9 578.6 843.1 517.7 844.2 577.0 845.3 566.8 846.4 501.6 847.8 558.2 849.1 562.1 850.3 527.5 851.7 544.2 852.9 541.5 854.0 535.7 855.1 552.1 856.1 557.8 857.2 551.3 858.5 530.3 859.8 563.3 860.9 544.0 862.0 513.6 863.0 550.2 864.3 558.3 865.3 525.8 866.5 564.3 867.5 516.6 868.4 552.4 869.6 541.9 870.9 549.9 872.1 538.8 873.1 564.6 874.2 571.6 875.4 533.7 876.5 553.0 877.7 553.2 878.8 539.5 880.1 551.8 881.2 537.5 882.5 542.3 883.7 539.8 884.8 558.8 885.9 544.8 887.0 540.1 888.1 557.7 889.1 540.6 890.4 550.3 891.5 560.0 892.7 538.4 894.0 548.5 895.1 535.3 896.2 531.8 897.1 556.2 898.2 540.0 899.5 521.6 900.8 563.1 902.1 536.9 903.4 548.3 904.5 536.9 905.9 549.6 906.9 541.2 907.9 549.1 909.1 535.5 910.4 557.4 911.3 540.2 912.6 531.8 913.6 551.2 914.8 548.5 915.8 539.7 917.0 548.7 918.2 542.8 919.2 552.0 920.3 540.7 921.4 559.1 922.7 548.9 923.8 541.4 925.1 561.0 926.1 548.8 927.3 536.8 928.5 547.9 929.6 532.4 930.9 548.0 931.8 543.4 933.2 550.6 934.4 559.1 935.5 552.8 936.6 543.0 937.7 551.0 938.8 542.3 940.0 545.3 940.9 553.0 942.1 543.9 943.2 550.3 944.2 536.9 945.2 541.8 946.1 539.3 947.2 553.9 948.3 539.1 949.3 552.5 950.6 545.3 951.7 543.5 952.8 557.9 953.8 538.2 955.2 557.4 956.3 557.2 957.5 545.3 958.4 554.2 959.8 538.9 961.1 556.0 962.0 526.6 963.3 533.4 964.2 556.4 965.5 542.4 966.6 548.3 967.8 545.2 969.1 554.6 970.1 544.9 971.5 540.1 972.5 551.2 973.8 548.3 974.9 545.5 976.0 538.6 977.2 554.8 978.4 545.0 979.4 553.3 980.5 544.6 981.7 552.4 982.9 536.2 984.1 541.3 985.2 554.8 986.2 538.0 987.3 545.3 988.4 555.0 989.6 552.8 990.9 541.7 991.9 555.5 993.0 536.3 994.2 552.9 995.3 548.4 996.6 537.0 997.8 549.0 999.0 539.8 1000.3 540.2 1001.6 554.4 1002.9 538.4 1004.2 554.9 1005.2 545.6 1006.3 549.6 1007.3 541.5 1008.4 549.5 1009.7 548.4 1011.0 540.0 1012.2 552.2 1013.5 537.8 1014.5 557.7 1015.8 544.2 1016.9 538.5 1018.0 552.6 1019.0 523.6 1020.4 570.5 1021.7 541.0 1022.7 593.3 1024.0 498.6 1025.0 550.6 1026.3 607.6 1027.6 526.1 1028.7 554.1 1029.8 501.6 1031.0 562.1 1032.0 528.4 1033.4 596.6 1034.4 534.6 1035.8 505.5 1037.1 512.1 1038.0 564.0 1039.3 524.3 1040.6 551.1 1041.9 543.1 1043.2 580.9 1044.2 520.2 1045.3 561.9 1046.6 544.4 1047.9 519.8 1049.0 554.3 1050.0 527.1 1051.1 558.9 1052.4 536.3 1053.7 550.9 1054.7 557.3 1055.8 541.3 1056.8 558.3 1058.1 542.3 1059.2 553.6 1060.4 528.0 1061.4 564.3 1062.5 555.2 1063.6 553.9 1064.9 538.8 1066.2 563.9 1067.4 540.1 1068.6 558.6 1069.9 545.4 1071.0 545.2 1072.0 521.6 1073.3 559.4 1074.7 544.6 1076.0 549.0 1077.2 534.7 1078.5 552.0 1079.5 549.8 1080.5 544.3 1081.5 550.2 1082.5 540.2 1083.7 556.5 1085.0 545.1 1086.0 550.2 1087.3 540.5 1088.4 553.6 1089.6 533.1 1090.8 557.9 1091.9 559.6 1092.8 536.7 1093.8 548.7 1095.0 544.0 1096.1 557.1 1097.3 541.1 1098.2 550.2 1099.3 538.9 1100.4 554.4 1101.5 534.6 1102.6 553.2 1103.7 534.1 1105.1 535.2 1106.1 540.5 1107.1 548.8 1108.2 539.4 1109.5 549.9 1110.7 542.6 1111.9 559.2 1113.0 545.5 1114.0 553.6 1115.2 545.0 1116.3 538.6 1117.4 551.8 1118.6 549.4 1119.9 549.6 1121.1 541.6 1122.4 552.5 1123.5 535.4 1124.6 549.0 1125.8 557.2 1127.2 555.3 1128.4 557.3 1129.4 516.6 1130.5 559.8 1131.6 595.6 1132.8 563.0 1134.0 544.6 1135.0 525.1 1136.1 550.3 1137.3 524.9 1138.3 561.4 1139.6 562.6 1140.9 557.7 1142.1 537.2 1143.2 548.5 1144.5 542.2 1145.8 560.9 1146.8 541.4 1148.0 532.4 1149.1 525.9 1150.2 568.1 1151.5 530.0 1152.6 557.0 1153.5 527.5 1154.7 562.6 1155.7 534.7 1156.8 549.0 1157.9 557.2 1159.1 538.4 1160.1 537.1 1161.1 555.2 1162.4 535.2 1163.7 567.4 1164.9 522.9 1165.9 563.6 1166.9 535.1 1168.2 563.5 1169.4 526.3 1170.5 562.6 1171.7 596.2 1172.7 541.0 1173.9 566.9 1175.0 519.0 1176.1 578.7 1177.3 466.6 1178.3 599.6 1179.3 540.9 1180.4 540.0 1181.7 569.5 1182.8 492.8 1183.9 536.1 1185.0 565.5 1186.3 558.6 1187.5 486.6 1188.7 567.7 1189.9 527.6 1191.1 596.6 1192.4 525.4 1193.7 491.6 1194.8 580.0 1195.9 583.2 1197.1 513.4 1198.3 557.3" stroke="#bfe484" stroke-width="1" fill="none" stroke-linejoin="bevel"/><path d="M209.3 450V642" stroke="#8cc8b4" stroke-width="1.2"/><path d="M222 489.6H271.5" stroke="#d8202a" stroke-width="1.9"/><path d="M213 489.6L223.5 485.6V493.6z" fill="#e81a24"/><text x="280.5" y="488.9" font-family="Liberation Sans" font-weight="bold" font-size="23.5" fill="#d8202a">2</text></svg>
</body></html>
